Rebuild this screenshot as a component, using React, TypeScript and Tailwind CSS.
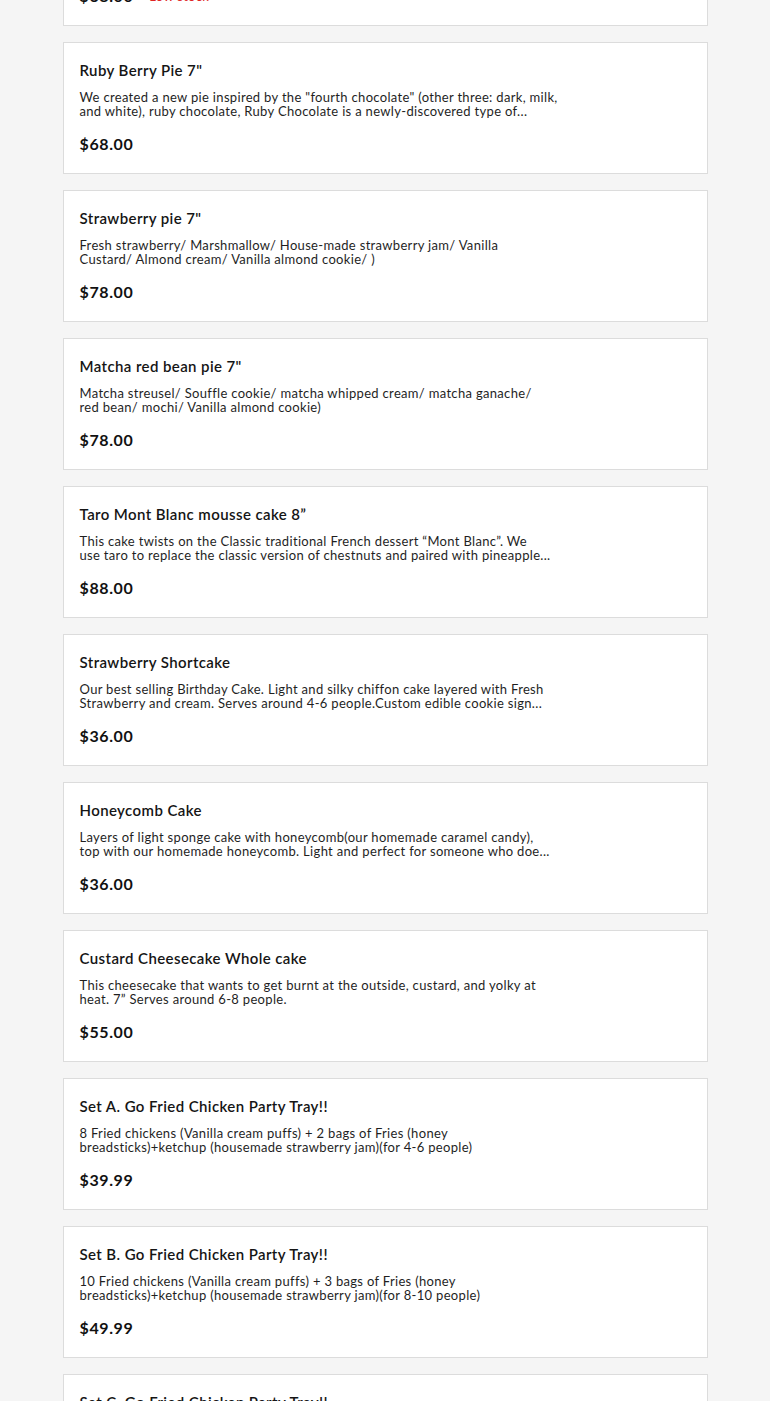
type Item = {
  title: string;
  lines: [string, string];
  price: string;
  lowStock?: boolean;
};

const items: Item[] = [
  {
    title: 'Earl Grey Chocolate Pie 7"',
    lines: ["Earl grey ganache/ Chocolate whipped cream/ Chocolate crumble/", "Vanilla almond cookie)"],
    price: "$68.00",
    lowStock: true,
  },
  {
    title: 'Ruby Berry Pie 7"',
    lines: [
      'We created a new pie inspired by the "fourth chocolate" (other three: dark, milk,',
      "and white), ruby chocolate, Ruby Chocolate is a newly-discovered type of...",
    ],
    price: "$68.00",
  },
  {
    title: 'Strawberry pie 7"',
    lines: [
      "Fresh strawberry/ Marshmallow/ House-made strawberry jam/ Vanilla",
      "Custard/ Almond cream/ Vanilla almond cookie/ )",
    ],
    price: "$78.00",
  },
  {
    title: 'Matcha red bean pie 7"',
    lines: [
      "Matcha streusel/ Souffle cookie/ matcha whipped cream/ matcha ganache/",
      "red bean/ mochi/ Vanilla almond cookie)",
    ],
    price: "$78.00",
  },
  {
    title: "Taro Mont Blanc mousse cake 8”",
    lines: [
      "This cake twists on the Classic traditional French dessert “Mont Blanc”. We",
      "use taro to replace the classic version of chestnuts and paired with pineapple...",
    ],
    price: "$88.00",
  },
  {
    title: "Strawberry Shortcake",
    lines: [
      "Our best selling Birthday Cake. Light and silky chiffon cake layered with Fresh",
      "Strawberry and cream. Serves around 4-6 people.Custom edible cookie sign...",
    ],
    price: "$36.00",
  },
  {
    title: "Honeycomb Cake",
    lines: [
      "Layers of light sponge cake with honeycomb(our homemade caramel candy),",
      "top with our homemade honeycomb. Light and perfect for someone who doe...",
    ],
    price: "$36.00",
  },
  {
    title: "Custard Cheesecake Whole cake",
    lines: [
      "This cheesecake that wants to get burnt at the outside, custard, and yolky at",
      "heat. 7” Serves around 6-8 people.",
    ],
    price: "$55.00",
  },
  {
    title: "Set A. Go Fried Chicken Party Tray!!",
    lines: [
      "8 Fried chickens (Vanilla cream puffs) + 2 bags of Fries (honey",
      "breadsticks)+ketchup (housemade strawberry jam)(for 4-6 people)",
    ],
    price: "$39.99",
  },
  {
    title: "Set B. Go Fried Chicken Party Tray!!",
    lines: [
      "10 Fried chickens (Vanilla cream puffs) + 3 bags of Fries (honey",
      "breadsticks)+ketchup (housemade strawberry jam)(for 8-10 people)",
    ],
    price: "$49.99",
  },
  {
    title: "Set C. Go Fried Chicken Party Tray!!",
    lines: [
      "12 Fried chickens (Vanilla cream puffs) + 4 bags of Fries (honey",
      "breadsticks)+ketchup (housemade strawberry jam)(for 10-12 people)",
    ],
    price: "$59.99",
  },
];

const ItemCard = ({ item }: { item: Item }) => (
  <div className="h-[132px] bg-white border border-[#dcdcdc] px-4 pt-[17px] flex flex-col">
    <span className="text-[15px] leading-5 font-semibold tracking-[0.4px] text-[#151515]">{item.title}</span>
    <div className="mt-[10px] text-[13px] leading-[14px] tracking-[0.32px] text-[#1f1f1f] whitespace-nowrap flex flex-col">
      <span>{item.lines[0]}</span>
      <span>{item.lines[1]}</span>
    </div>
    <div className="mt-4 flex items-center gap-4 leading-5">
      <span className="text-[16px] font-bold tracking-[0.6px] text-[#111]">{item.price}</span>
      {item.lowStock && <span className="text-[13px] tracking-[0.3px] text-[#e02424]">Low stock</span>}
    </div>
  </div>
);

export default function App() {
  return (
    <div className="min-h-[1401px] bg-[#f5f5f5] overflow-hidden" style={{ fontFamily: "Lato, 'Open Sans', sans-serif" }}>
      <div className="w-[645px] mx-auto -mt-[106px] flex flex-col gap-4 pb-8">
        {items.map((item) => (
          <ItemCard item={item} key={item.title} />
        ))}
      </div>
    </div>
  );
}
